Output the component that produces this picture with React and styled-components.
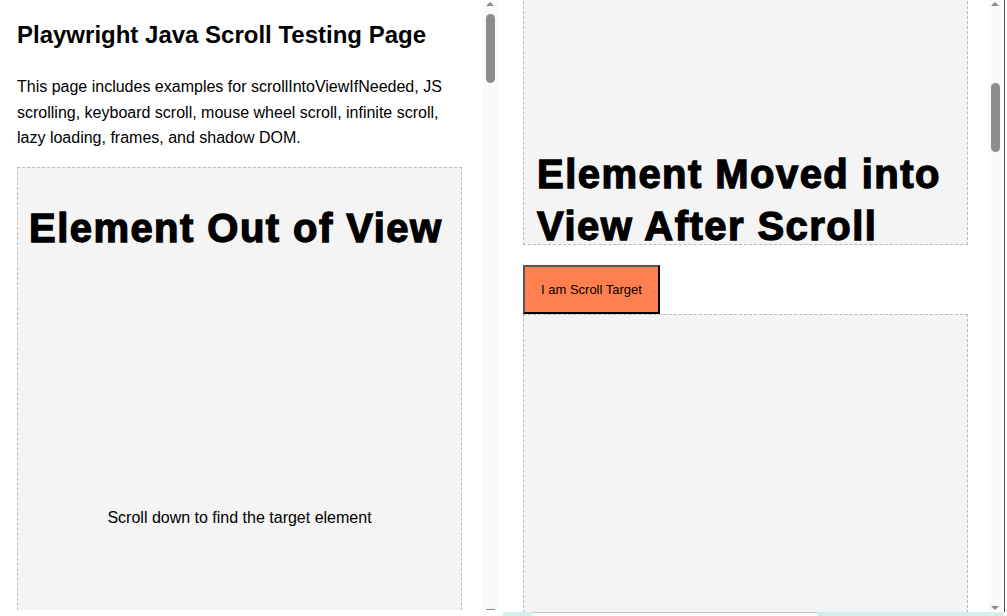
import React from 'react';
import styled, { createGlobalStyle } from 'styled-components';

const GlobalStyle = createGlobalStyle`
  html, body {
    margin: 0;
    padding: 0;
    background: #fff;
    font-family: "Liberation Sans", Arial, sans-serif;
    color: #000;
  }
`;

const Page = styled.div`
  width: 1007px;
  height: 616px;
  display: flex;
  flex-direction: column;
  overflow: hidden;
`;

const Row = styled.div`
  display: flex;
  height: 612px;
`;

const Frame = styled.div`
  display: flex;
  width: ${p => p.width}px;
  height: ${p => p.height}px;
  overflow: hidden;
  ${p => p.edge && 'border-right: 1px solid #4a4a4a;'}
`;

const Content = styled.div`
  flex: 1;
  overflow: hidden;
  padding: ${p => p.pad};
`;

const Track = styled.div`
  width: 14px;
  margin-right: ${p => p.gap || 0}px;
  background: #fafafa;
  display: flex;
  flex-direction: column;
  align-items: center;
`;

const Arrow = styled.div`
  width: 0;
  height: 0;
  border-left: 4px solid transparent;
  border-right: 4px solid transparent;
  ${p => p.down
    ? 'border-top: 4px solid #8a8a8a; margin-top: auto; margin-bottom: 2px;'
    : 'border-bottom: 4px solid #8a8a8a; margin-top: 2px;'}
`;

const Dash = styled.div`
  width: 9px;
  height: 1px;
  background: #8a8a8a;
  margin-top: auto;
`;

const Thumb = styled.div`
  width: 9px;
  height: ${p => p.size}px;
  margin-top: ${p => p.offset}px;
  border-radius: 5px;
  background: #8c8c8c;
`;

const Title = styled.h1`
  margin: 21px 0 0;
  font-size: 24px;
  line-height: 28px;
  font-weight: bold;
`;

const Intro = styled.p`
  margin: 25px 0 0;
  width: 444px;
  font-size: 16px;
  line-height: 25.6px;
`;

const Panel = styled.div`
  box-sizing: border-box;
  width: 445px;
  border: 1px dashed #bbb;
  background: #f4f4f4;
  padding: 0 ${p => p.side}px;
  display: flex;
  flex-direction: column;
  ${p => p.height && `height: ${p.height}px;`}
  ${p => p.lift && `margin-top: -${p.lift}px; justify-content: flex-end;`}
  margin-top: ${p => p.top ? `${p.top}px` : undefined};
`;

const BigHeading = styled.h2`
  margin: ${p => p.margin};
  font-size: 40px;
  line-height: 52px;
  font-weight: bold;
  letter-spacing: 1.45px;
  -webkit-text-stroke: 1.3px #000;
`;

const Hint = styled.p`
  margin: 255px 0 0;
  font-size: 16px;
  line-height: 18px;
  text-align: center;
`;

const TargetButton = styled.button`
  box-sizing: border-box;
  display: block;
  margin: 20px 0 0;
  height: 49px;
  padding: 0 16px;
  background: #ff7f50;
  border: 2px solid;
  border-color: #555 #000 #000 #555;
  font-family: "Liberation Sans", Arial, sans-serif;
  font-size: 13px;
  color: #000;
`;

const Strip = styled.div`
  display: flex;
  height: 4px;
  margin-left: 503px;
  width: 501px;
`;

const StripPart = styled.div`
  width: ${p => p.w}px;
  background: ${p => p.teal ? '#d3f0ec' : '#fff'};
  ${p => !p.teal && 'border-top: 1px solid #c8c8c8; box-sizing: border-box;'}
`;

export default function App() {
  return (
    <Page>
      <GlobalStyle />
      <Row>
        <Frame width={497} height={610}>
          <Content pad="0 21px 0 17px">
            <Title>Playwright Java Scroll Testing Page</Title>
            <Intro>
              This page includes examples for scrollIntoViewIfNeeded, JS scrolling, keyboard scroll,
              mouse wheel scroll, infinite scroll, lazy loading, frames, and shadow DOM.
            </Intro>
            <Panel side={11} height={1200} top={16}>
              <BigHeading margin="34px 0 0">Element Out of View</BigHeading>
              <Hint>Scroll down to find the target element</Hint>
            </Panel>
          </Content>
          <Track>
            <Arrow />
            <Thumb size={69} offset={8} />
            <Dash />
          </Track>
        </Frame>
        <Frame width={507} height={612} edge>
          <Content pad="0 20px 0 26px">
            <Panel side={13} height={264} lift={19}>
              <BigHeading margin="0 0 -8px">Element Moved into View After Scroll</BigHeading>
            </Panel>
            <TargetButton>I am Scroll Target</TargetButton>
            <Panel side={13} height={600} />
          </Content>
          <Track gap={2}>
            <Arrow />
            <Thumb size={69} offset={77} />
            <Arrow down />
          </Track>
        </Frame>
      </Row>
      <Strip>
        <StripPart teal w={29} />
        <StripPart w={285} />
        <StripPart teal w={187} />
      </Strip>
    </Page>
  );
}
